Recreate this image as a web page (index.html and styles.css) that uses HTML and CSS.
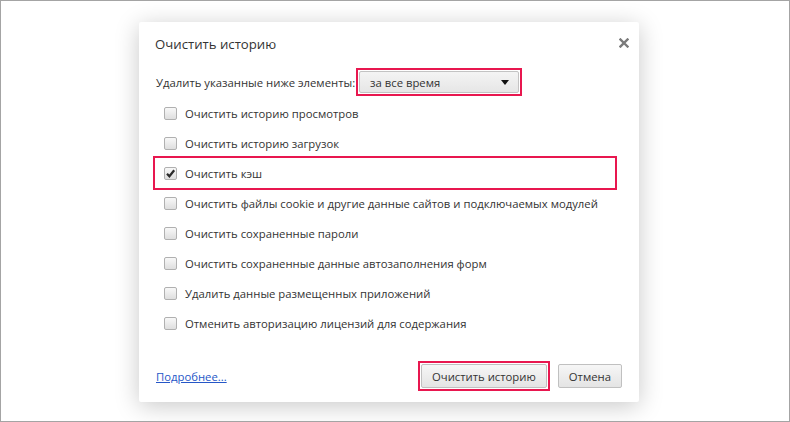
FILE: index.html
```html
<!DOCTYPE html>
<html>
  <head>
    <title>Очистить историю</title>
    <link rel="stylesheet" href="styles.css">
  </head>
  <body>
    <div class="page">
      <div class="dialog">
        <div class="dialog-header">
          <h1 class="title">Очистить историю</h1>
          <button class="close" title="Закрыть">
            <svg width="10" height="10" viewBox="0 0 10 10">
              <path d="M1.5 1.5 L8.5 8.5 M8.5 1.5 L1.5 8.5" stroke="#7a7a7a" stroke-width="2.4" stroke-linecap="square" />
            </svg>
          </button>
        </div>

        <div class="period-row">
          <span class="period-label">Удалить указанные ниже элементы:</span>
          <span class="mark">
            <span class="select">
              <span class="select-value">за все время</span>
              <span class="select-arrow"></span>
            </span>
          </span>
        </div>

        <ul class="options">
          <li class="option"><span class="box"></span>Очистить историю просмотров</li>
          <li class="option"><span class="box"></span>Очистить историю загрузок</li>
          <li class="option marked">
            <span class="box">
              <svg width="11" height="11" viewBox="0 0 11 11">
                <path d="M2 5.8 L4.4 8.3 L9.2 2.2" fill="none" stroke="#2b2b2b" stroke-width="2.2" />
              </svg>
            </span>Очистить кэш
          </li>
          <li class="option"><span class="box"></span>Очистить файлы cookie и другие данные сайтов и подключаемых модулей</li>
          <li class="option"><span class="box"></span>Очистить сохраненные пароли</li>
          <li class="option"><span class="box"></span>Очистить сохраненные данные автозаполнения форм</li>
          <li class="option"><span class="box"></span>Удалить данные размещенных приложений</li>
          <li class="option"><span class="box"></span>Отменить авторизацию лицензий для содержания</li>
        </ul>

        <div class="dialog-footer">
          <a class="more" href="#">Подробнее...</a>
          <div class="actions">
            <span class="mark"><button class="btn">Очистить историю</button></span>
            <button class="btn">Отмена</button>
          </div>
        </div>
      </div>
    </div>
  </body>
</html>
```

FILE: styles.css
```css
/* Page */
body {
  margin: 0;
  font-family: "Open Sans", "Noto Sans", sans-serif;
  font-size: 11.3px;
  color: #333;
  background: #fff;
}

.page {
  width: 790px;
  height: 422px;
  box-sizing: border-box;
  border: 1px solid #a4a4a4;
  padding: 21px 0 0 138px;
  overflow: hidden;
}

/* Dialog window */
.dialog {
  width: 500px;
  height: 380px;
  box-sizing: border-box;
  background: #fff;
  border-radius: 2px;
  box-shadow: 0 4px 24px rgba(0, 0, 0, 0.22);
  display: flex;
  flex-direction: column;
}

.dialog-header {
  display: flex;
  justify-content: space-between;
  padding: 12px 10px 0 16px;
  height: 32px;
}

.title {
  margin: 0;
  font-size: 13.2px;
  font-weight: normal;
  line-height: 20px;
  color: #333;
}

.close {
  border: none;
  background: none;
  padding: 0;
  width: 10px;
  height: 10px;
  margin-top: 2px;
  cursor: pointer;
}

/* Red annotation frame */
.mark {
  display: inline-flex;
  border: 2px solid #e8174f;
}

/* Time range row */
.period-row {
  display: flex;
  align-items: center;
  height: 32px;
  padding-left: 17px;
}

.period-label {
  margin-right: 1px;
}

.select {
  display: flex;
  align-items: center;
  justify-content: space-between;
  width: 160px;
  height: 22px;
  box-sizing: border-box;
  margin: 1px;
  padding: 0 9px 0 10px;
  border: 1px solid #c3c3c3;
  border-radius: 2px;
  background: linear-gradient(#f4f4f4, #e6e6e6);
}

.select-arrow {
  width: 0;
  height: 0;
  border-left: 4px solid transparent;
  border-right: 4px solid transparent;
  border-top: 5px solid #111;
}

/* Checkbox list */
.options {
  list-style: none;
  margin: 0;
  padding: 0;
}

.option {
  display: flex;
  align-items: center;
  height: 30px;
  margin-left: 16px;
  padding-left: 9px;
  box-sizing: border-box;
  white-space: nowrap;
}

.option.marked {
  width: 460px;
  outline: 2px solid #e8174f;
}

.box {
  flex: none;
  width: 13px;
  height: 13px;
  box-sizing: border-box;
  border: 1px solid #b0b0b0;
  border-radius: 2px;
  background: linear-gradient(#f8f8f8, #dedede);
  margin-right: 8px;
  display: flex;
  align-items: center;
  justify-content: center;
}

/* Footer */
.dialog-footer {
  margin-top: auto;
  display: flex;
  align-items: center;
  justify-content: space-between;
  padding: 0 17px 11px 17px;
}

.more {
  color: #2657c7;
  text-decoration: underline;
}

.actions {
  display: flex;
  align-items: center;
  gap: 8px;
}

.btn {
  height: 24px;
  box-sizing: border-box;
  margin: 1px;
  padding: 0 10px;
  font-family: inherit;
  font-size: 11.3px;
  color: #333;
  border: 1px solid #c0c0c0;
  border-radius: 2px;
  background: linear-gradient(#f6f6f6, #e4e4e4);
  cursor: pointer;
}

.actions > .btn {
  margin: 0;
}
```
